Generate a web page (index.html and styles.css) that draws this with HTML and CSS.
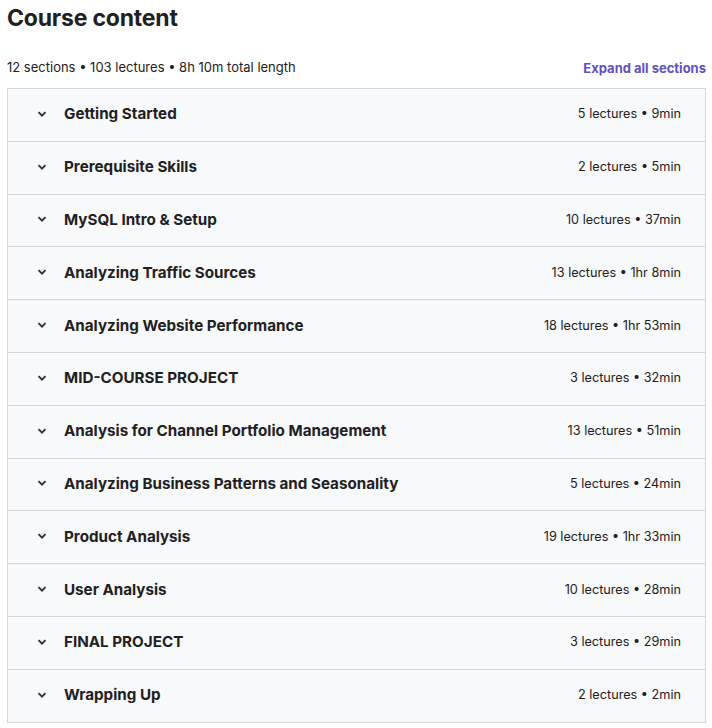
FILE: index.html
```html
<!DOCTYPE html>
<html>
<head>
<meta charset="utf-8">
<link rel="stylesheet" href="styles.css">
</head>
<body>
<div class="page">
  <h2 class="title">Course content</h2>
  <div class="summary">
    <span>12 sections • 103 lectures • 8h 10m total length</span>
    <button class="expand">Expand all sections</button>
  </div>
  <div class="sections">
    <div class="row"><span class="chev"><svg width="12" height="12" viewBox="0 0 12 12"><path d="M2.5 4.2 6 7.7 9.5 4.2" fill="none" stroke="#2d2f31" stroke-width="1.8"/></svg></span><span class="name">Getting Started</span><span class="meta">5 lectures • 9min</span></div>
    <div class="row"><span class="chev"><svg width="12" height="12" viewBox="0 0 12 12"><path d="M2.5 4.2 6 7.7 9.5 4.2" fill="none" stroke="#2d2f31" stroke-width="1.8"/></svg></span><span class="name">Prerequisite Skills</span><span class="meta">2 lectures • 5min</span></div>
    <div class="row"><span class="chev"><svg width="12" height="12" viewBox="0 0 12 12"><path d="M2.5 4.2 6 7.7 9.5 4.2" fill="none" stroke="#2d2f31" stroke-width="1.8"/></svg></span><span class="name">MySQL Intro &amp; Setup</span><span class="meta">10 lectures • 37min</span></div>
    <div class="row"><span class="chev"><svg width="12" height="12" viewBox="0 0 12 12"><path d="M2.5 4.2 6 7.7 9.5 4.2" fill="none" stroke="#2d2f31" stroke-width="1.8"/></svg></span><span class="name">Analyzing Traffic Sources</span><span class="meta">13 lectures • 1hr 8min</span></div>
    <div class="row"><span class="chev"><svg width="12" height="12" viewBox="0 0 12 12"><path d="M2.5 4.2 6 7.7 9.5 4.2" fill="none" stroke="#2d2f31" stroke-width="1.8"/></svg></span><span class="name">Analyzing Website Performance</span><span class="meta">18 lectures • 1hr 53min</span></div>
    <div class="row"><span class="chev"><svg width="12" height="12" viewBox="0 0 12 12"><path d="M2.5 4.2 6 7.7 9.5 4.2" fill="none" stroke="#2d2f31" stroke-width="1.8"/></svg></span><span class="name">MID-COURSE PROJECT</span><span class="meta">3 lectures • 32min</span></div>
    <div class="row"><span class="chev"><svg width="12" height="12" viewBox="0 0 12 12"><path d="M2.5 4.2 6 7.7 9.5 4.2" fill="none" stroke="#2d2f31" stroke-width="1.8"/></svg></span><span class="name">Analysis for Channel Portfolio Management</span><span class="meta">13 lectures • 51min</span></div>
    <div class="row"><span class="chev"><svg width="12" height="12" viewBox="0 0 12 12"><path d="M2.5 4.2 6 7.7 9.5 4.2" fill="none" stroke="#2d2f31" stroke-width="1.8"/></svg></span><span class="name">Analyzing Business Patterns and Seasonality</span><span class="meta">5 lectures • 24min</span></div>
    <div class="row"><span class="chev"><svg width="12" height="12" viewBox="0 0 12 12"><path d="M2.5 4.2 6 7.7 9.5 4.2" fill="none" stroke="#2d2f31" stroke-width="1.8"/></svg></span><span class="name">Product Analysis</span><span class="meta">19 lectures • 1hr 33min</span></div>
    <div class="row"><span class="chev"><svg width="12" height="12" viewBox="0 0 12 12"><path d="M2.5 4.2 6 7.7 9.5 4.2" fill="none" stroke="#2d2f31" stroke-width="1.8"/></svg></span><span class="name">User Analysis</span><span class="meta">10 lectures • 28min</span></div>
    <div class="row"><span class="chev"><svg width="12" height="12" viewBox="0 0 12 12"><path d="M2.5 4.2 6 7.7 9.5 4.2" fill="none" stroke="#2d2f31" stroke-width="1.8"/></svg></span><span class="name">FINAL PROJECT</span><span class="meta">3 lectures • 29min</span></div>
    <div class="row"><span class="chev"><svg width="12" height="12" viewBox="0 0 12 12"><path d="M2.5 4.2 6 7.7 9.5 4.2" fill="none" stroke="#2d2f31" stroke-width="1.8"/></svg></span><span class="name">Wrapping Up</span><span class="meta">2 lectures • 2min</span></div>
  </div>
</div>
</body>
</html>
```
FILE: styles.css
```css
* { box-sizing: border-box; }
body {
  margin: 0;
  font-family: Inter, "Liberation Sans", sans-serif;
  color: #1f2022;
  background: #fff;
}
.page {
  padding: 2px 6px 0 7px;
}
.title {
  margin: 0;
  font-size: 23px;
  font-weight: 700;
  line-height: 32px;
  letter-spacing: -0.2px;
}
.summary {
  display: flex;
  justify-content: space-between;
  align-items: center;
  height: 54px;
  padding-top: 12px;
  font-size: 13px;
}
.expand {
  border: 0;
  background: none;
  padding: 0;
  font-family: inherit;
  font-size: 13px;
  font-weight: 700;
  color: #6152c2;
  margin-top: 2px;
}
.sections {
  border: 1px solid #d1d7dc;
  border-bottom: 0;
}
.row {
  display: flex;
  align-items: center;
  height: 52.8px;
  padding: 0 24px 2px 28px;
  background: #f7f9fa;
  border-bottom: 1px solid #d1d7dc;
}
.chev {
  display: flex;
  width: 12px;
  margin-right: 16px;
}
.name {
  flex: 1;
  font-size: 15.2px;
  font-weight: 700;
}
.meta {
  font-size: 12.7px;
}
```
